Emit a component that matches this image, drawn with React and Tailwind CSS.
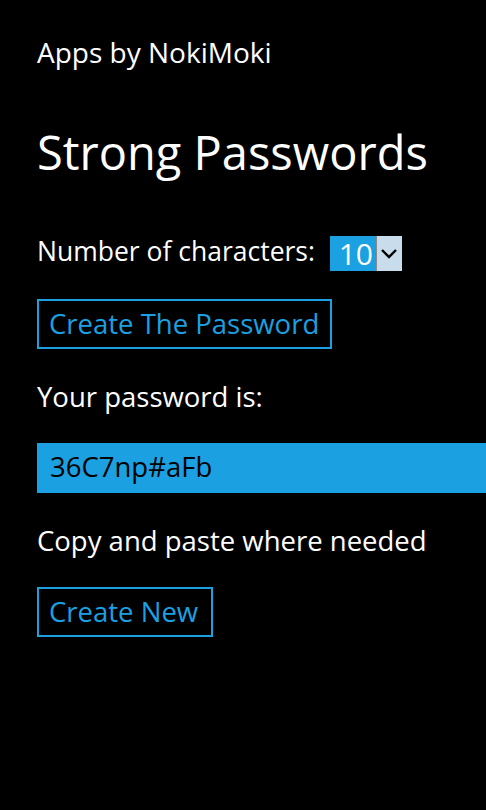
export default function App() {
  return (
    <main
      className="min-h-[810px] w-full overflow-hidden bg-black text-white"
      style={{ fontFamily: '"Open Sans", "Noto Sans", sans-serif' }}
    >
      <div className="pl-[37px] pt-[34px]">
        <p className="text-[28px] leading-[36px]">Apps by NokiMoki</p>

        <h1 className="mt-[54px] text-[47px] leading-[56px]">Strong Passwords</h1>

        <div className="mt-[53px] flex items-start">
          <span className="text-[26.5px] leading-[36px]">Number of characters:</span>
          <div className="ml-[15px] mt-[3px] flex h-[35px]">
            <div className="flex w-[46px] items-center justify-end bg-[#1ba1e2] pr-[3px] text-[30px] leading-none">
              10
            </div>
            <div className="flex w-[26px] items-center justify-center border-l border-[#8a8a8a] bg-[#c9dcec]">
              <svg width="18" height="11" viewBox="0 0 18 11" fill="none">
                <path d="M2 2l7 7 7-7" stroke="#000" strokeWidth="2.4" />
              </svg>
            </div>
          </div>
        </div>

        <button className="mt-[28px] flex h-[50px] w-[295px] items-center border-2 border-[#1ba1e2] pl-[10px] text-[27.5px] leading-[36px] text-[#1ba1e2]">
          Create The Password
        </button>

        <p className="mt-[30px] text-[27.5px] leading-[36px]">Your password is:</p>

        <div className="mt-[28px] flex h-[50px] items-center bg-[#1ba1e2] pb-[2px] pl-[13px] text-[27.5px] leading-[36px] text-black">
          36C7np#aFb
        </div>

        <p className="mt-[30px] text-[27.5px] leading-[36px]">Copy and paste where needed</p>

        <button className="mt-[28px] flex h-[50px] w-[176px] items-center border-2 border-[#1ba1e2] pl-[10px] text-[27.5px] leading-[36px] text-[#1ba1e2]">
          Create New
        </button>
      </div>
    </main>
  );
}
